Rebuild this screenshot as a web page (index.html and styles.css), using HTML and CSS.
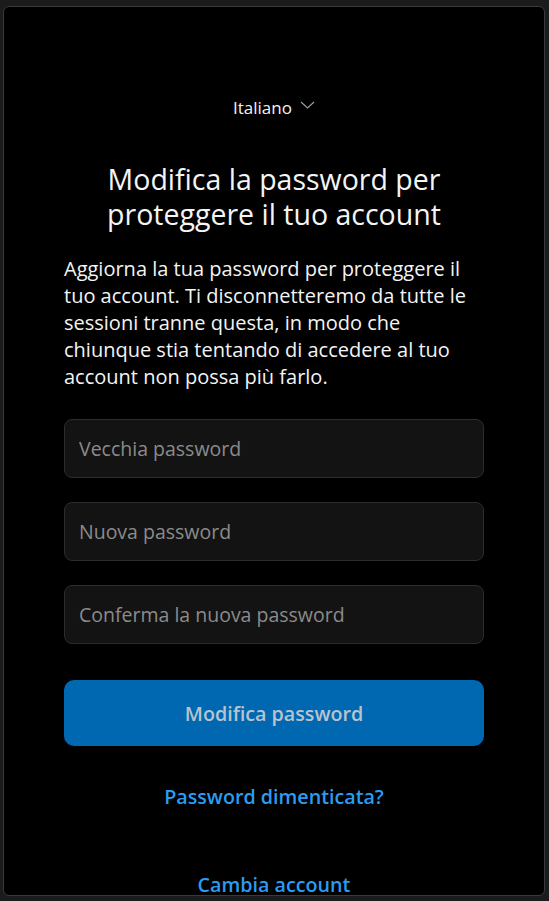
FILE: index.html
```html
<!DOCTYPE html>
<html lang="it">
<head>
<meta charset="utf-8">
<link rel="stylesheet" href="styles.css">
</head>
<body>
<div class="window">
  <div class="content">
    <button class="lang">Italiano
      <svg class="chev" width="15" height="8" viewBox="0 0 15 8"><path d="M1 1l6.5 6 6.5-6" fill="none" stroke="#a0a0a0" stroke-width="1.1"/></svg>
    </button>
    <h1 class="title">Modifica la password per proteggere il tuo account</h1>
    <p class="desc">Aggiorna la tua password per proteggere il tuo account. Ti disconnetteremo da tutte le sessioni tranne questa, in modo che chiunque stia tentando di accedere al tuo account non possa più farlo.</p>
    <div class="fields">
      <input class="field" type="password" placeholder="Vecchia password">
      <input class="field" type="password" placeholder="Nuova password">
      <input class="field" type="password" placeholder="Conferma la nuova password">
    </div>
    <button class="primary">Modifica password</button>
    <a class="link forgot" href="#">Password dimenticata?</a>
    <a class="link switch" href="#">Cambia account</a>
  </div>
</div>
</body>
</html>
```
FILE: styles.css
```css
html, body {
  margin: 0;
  padding: 0;
  background: #1b1b1b;
  height: 901px;
  overflow: hidden;
}
body {
  padding: 6px 4px 5px 3px;
  box-sizing: border-box;
  font-family: "Open Sans", "Noto Sans", sans-serif;
}
.window {
  height: 890px;
  background: #000;
  border: 1px solid #3a3a3a;
  border-radius: 6px;
  box-sizing: border-box;
  overflow: hidden;
}
.content {
  width: 420px;
  margin: 0 auto;
  display: flex;
  flex-direction: column;
  align-items: stretch;
}
.lang {
  align-self: center;
  margin-top: 88px;
  background: none;
  border: 0;
  color: #f2f2f2;
  font-family: inherit;
  font-size: 17px;
  display: flex;
  align-items: center;
  gap: 8px;
  padding: 0;
  height: 24px;
}
.chev { margin-top: -4px; }
.title {
  margin: 43px 0 0;
  text-align: center;
  font-weight: 400;
  font-size: 28.5px;
  line-height: 35px;
  color: #f4f4f4;
}
.desc {
  margin: 23px 0 0;
  font-size: 20px;
  line-height: 27px;
  color: #f4f4f4;
}
.fields {
  margin-top: 29px;
  display: flex;
  flex-direction: column;
  gap: 24px;
}
.field {
  height: 59px;
  box-sizing: border-box;
  background: #131313;
  border: 1px solid #2c2c2c;
  border-radius: 8px;
  padding: 0 14px;
  font-family: inherit;
  font-size: 19.5px;
  color: #eee;
  outline: none;
}
.field::placeholder { color: #8b8b8b; }
.primary {
  margin-top: 36px;
  height: 66px;
  border: 0;
  border-radius: 10px;
  background: #0067b1;
  color: #b9c3cd;
  font-family: inherit;
  font-size: 19.7px;
  font-weight: 600;
}
.link {
  align-self: center;
  color: #2b9cf2;
  font-weight: 600;
  font-size: 19.7px;
  text-decoration: none;
}
.forgot { margin-top: 37px; }
.switch { margin-top: 61px; }
```
